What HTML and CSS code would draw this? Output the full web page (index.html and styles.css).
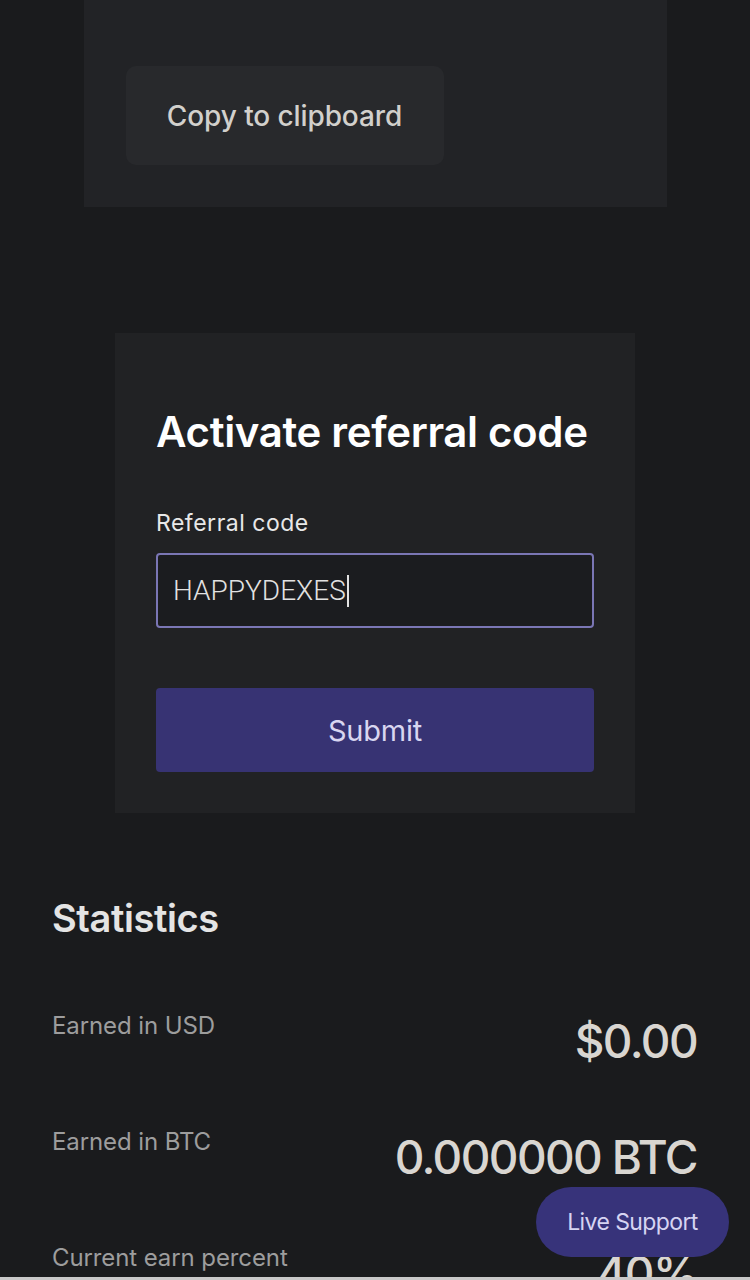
FILE: index.html
```html
<!DOCTYPE html>
<html lang="en">
<head>
<meta charset="utf-8">
<title>Referral</title>
<link rel="stylesheet" href="styles.css">
</head>
<body>
<main class="page">
  <section class="link-card">
    <button class="copy-btn" type="button">Copy to clipboard</button>
  </section>

  <section class="activate-card">
    <h2 class="activate-title">Activate referral code</h2>
    <label class="field-label" for="code">Referral code</label>
    <div class="input-box"><span class="input-text">HAPPYDEXES</span><span class="caret"></span></div>
    <button class="submit-btn" type="button">Submit</button>
  </section>

  <section class="stats">
    <h2 class="stats-title">Statistics</h2>
    <div class="stat-row">
      <span class="stat-label">Earned in USD</span>
      <span class="stat-value">$0.00</span>
    </div>
    <div class="stat-row">
      <span class="stat-label">Earned in BTC</span>
      <span class="stat-value">0.000000 BTC</span>
    </div>
    <div class="stat-row">
      <span class="stat-label">Current earn percent</span>
      <span class="stat-value">40%</span>
    </div>
  </section>
</main>
<button class="live-support" type="button">Live Support</button>
<div class="bottom-edge"></div>
</body>
</html>
```

FILE: styles.css
```css
html, body {
  margin: 0;
  padding: 0;
  background: #1a1b1d;
  height: 1280px;
  overflow: hidden;
}

body {
  font-family: Inter, "Open Sans", sans-serif;
  color: #e6e6e6;
}

.page {
  display: flex;
  flex-direction: column;
  align-items: center;
}

.link-card {
  width: 583px;
  box-sizing: border-box;
  background: #222326;
  padding: 66px 42px 42px;
  display: flex;
}

.copy-btn {
  width: 318px;
  height: 99px;
  border: none;
  border-radius: 10px;
  background: #28292c;
  color: #d2d0cc;
  font-family: Inter, sans-serif;
  font-size: 28px;
  font-weight: 500;
  letter-spacing: -0.1px;
  padding: 0;
}

.activate-card {
  margin-top: 126px;
  width: 520px;
  box-sizing: border-box;
  background: #212224;
  padding: 74px 41px 41px;
  display: flex;
  flex-direction: column;
}

.activate-title {
  margin: 0;
  font-size: 42px;
  line-height: 50px;
  font-weight: 600;
  letter-spacing: -0.35px;
  color: #ffffff;
}

.field-label {
  margin-top: 52px;
  font-size: 23px;
  line-height: 28px;
  color: #e8e8e8;
  letter-spacing: 0.5px;
}

.input-box {
  margin-top: 16px;
  height: 75px;
  box-sizing: border-box;
  border: 2px solid #7a76b4;
  border-radius: 4px;
  background: #1b1c1f;
  display: flex;
  align-items: center;
  padding-left: 15px;
}

.input-text {
  font-family: Roboto, sans-serif;
  font-weight: 300;
  font-size: 28px;
  color: #e2e2e2;
  letter-spacing: 0;
}

.caret {
  width: 2px;
  height: 32px;
  background: #e2e2e2;
  margin-left: 1px;
}

.submit-btn {
  margin-top: 60px;
  height: 84px;
  border: none;
  border-radius: 4px;
  background: #373373;
  color: #d8d6f0;
  font-family: Inter, sans-serif;
  font-size: 29px;
  font-weight: 400;
  letter-spacing: -0.2px;
}

.stats {
  align-self: stretch;
  padding: 82px 53px 0 52px;
  display: flex;
  flex-direction: column;
}

.stats-title {
  margin: 0;
  font-size: 38px;
  line-height: 46px;
  font-weight: 600;
  letter-spacing: -0.4px;
  color: #e4e4e4;
}

.stat-row {
  display: flex;
  justify-content: space-between;
  align-items: flex-start;
  height: 116px;
}

.stat-row:first-of-type {
  margin-top: 69px;
}

.stat-label {
  font-size: 24px;
  line-height: 32px;
  letter-spacing: -0.1px;
  color: #9d9d9d;
}

.stat-value {
  font-size: 46px;
  line-height: 56px;
  font-weight: 500;
  letter-spacing: -1.6px;
  color: #d9d6d1;
  margin-top: 3px;
}

.live-support {
  position: fixed;
  left: 536px;
  top: 1187px;
  width: 193px;
  height: 70px;
  border: none;
  border-radius: 35px;
  background: #37337a;
  color: #d6d4f2;
  font-family: Inter, sans-serif;
  font-size: 23px;
  letter-spacing: -0.6px;
  padding: 0;
}

.bottom-edge {
  position: fixed;
  left: 0;
  right: 0;
  bottom: 0;
  height: 3px;
  background: #c9c9c9;
}
```
